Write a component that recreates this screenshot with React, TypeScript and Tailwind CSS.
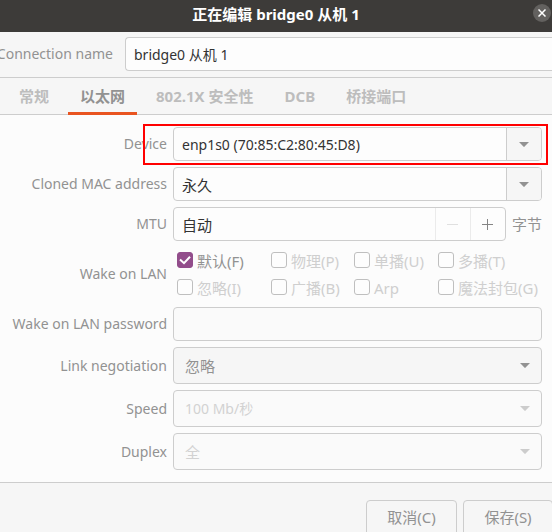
import { useState, type ReactNode } from "react";

function Caret({ className = "" }: { className?: string }) {
  return (
    <svg viewBox="0 0 10 5" aria-hidden="true" className={`h-[5px] w-2.5 fill-current ${className}`}>
      <path d="M0 0H10L5.6 4.6Q5 5.2 4.4 4.6Z" />
    </svg>
  );
}

function Field({ id, label, children }: { id: string; label: string; children: ReactNode }) {
  return (
    <>
      <label htmlFor={id} className="self-center text-right text-sm whitespace-nowrap">
        {label}
      </label>
      {children}
    </>
  );
}

function Combo({ id, value, className = "" }: { id: string; value: string; className?: string }) {
  return (
    <div className="flex h-[34px] overflow-hidden rounded border border-[#cdcdcd] bg-[#fdfdfd]">
      <input
        id={id}
        defaultValue={value}
        className={`min-w-0 flex-1 px-2 pt-0.5 text-[#333333] outline-none ${className}`}
      />
      <button
        type="button"
        aria-label="打开列表"
        className="flex w-[35px] items-center justify-center border-l border-[#cdcdcd] bg-[#f6f6f6] text-[#929292]"
      >
        <Caret />
      </button>
    </div>
  );
}

function Dropdown({
  id,
  value,
  disabled = false,
  className = "",
}: {
  id: string;
  value: string;
  disabled?: boolean;
  className?: string;
}) {
  return (
    <div className="relative">
      <select
        id={id}
        disabled={disabled}
        className={`block h-[37px] w-full appearance-none rounded border border-[#cdcdcd] bg-[#f6f6f6] px-[11px] text-[#929292] opacity-100 outline-none disabled:bg-[#fafafa] disabled:text-[#d2d2d2] ${className}`}
      >
        <option>{value}</option>
      </select>
      <Caret
        className={`pointer-events-none absolute top-4 right-3 ${disabled ? "text-[#cccccc]" : "text-[#929292]"}`}
      />
    </div>
  );
}

function Check({ label, checked = false, disabled = false }: { label: string; checked?: boolean; disabled?: boolean }) {
  return (
    <label className={`flex h-[27px] items-center gap-1 pb-0.5 whitespace-nowrap ${disabled ? "text-[#cfcfcf]" : ""}`}>
      <span className="grid size-4 shrink-0 place-items-center">
        <input
          type="checkbox"
          defaultChecked={checked}
          disabled={disabled}
          className="peer col-start-1 row-start-1 size-4 appearance-none rounded-[3px] border border-[#bfbfbf] bg-[#fdfdfd] checked:border-[#924d8b] checked:bg-[#924d8b]"
        />
        <svg
          viewBox="0 0 16 16"
          aria-hidden="true"
          className="pointer-events-none invisible z-10 col-start-1 row-start-1 size-4 fill-none stroke-white stroke-2 peer-checked:visible"
        >
          <path d="M3 7.5L7 11.2L13 4.8" />
        </svg>
      </span>
      <span className="pt-0.5">{label}</span>
    </label>
  );
}

const tabs = ["常规", "以太网", "802.1X 安全性", "DCB", "桥接端口"];

const wakeOptions = ["物理(P)", "单播(U)", "多播(T)", "忽略(I)", "广播(B)", "Arp", "魔法封包(G)"];

export default function App() {
  const [active, setActive] = useState("以太网");

  return (
    <div className="flex min-h-screen flex-col overflow-hidden bg-[#f6f6f6] font-['Noto_Sans','Noto_Sans_CJK_SC',sans-serif] text-[15px] leading-5 text-[#929292]">
      <header className="grid h-8 grid-cols-[1fr_auto_1fr] items-center bg-[#3d3b39] pb-1.5 text-white">
        <h1 className="col-start-2 pt-0.5 font-bold">正在编辑 bridge0 从机 1</h1>
        <button
          type="button"
          aria-label="关闭"
          className="mr-px grid size-[18px] place-items-center justify-self-end rounded-full bg-[#63615f]"
        >
          <svg viewBox="0 0 8 8" aria-hidden="true" className="size-2 stroke-white stroke-[1.5]">
            <path d="M0.5 0.5L7.5 7.5M7.5 0.5L0.5 7.5" />
          </svg>
        </button>
      </header>

      <div className="flex gap-3 border-b border-[#cdcdcd] pt-[5px] pb-1.5 text-sm">
        <label htmlFor="name" className="flex w-[113px] shrink-0 items-center justify-end whitespace-nowrap">
          Connection name
        </label>
        <input
          id="name"
          defaultValue="bridge0 从机 1"
          className="h-[34px] min-w-0 flex-1 rounded-l border border-r-0 border-[#cdcdcd] bg-[#fdfdfd] px-2 text-[#333333] outline-none"
        />
      </div>

      <div role="tablist" className="flex h-[37px] gap-[7px] border-b border-[#cdcdcd] pl-[7px]">
        {tabs.map((tab) => (
          <button
            key={tab}
            type="button"
            role="tab"
            aria-selected={tab === active}
            onClick={() => setActive(tab)}
            className="-mb-px border-b-3 border-transparent px-3 pt-0.5 font-bold whitespace-nowrap text-[#bdbdbd] aria-selected:border-[#e95420] aria-selected:text-[#929292]"
          >
            {tab}
          </button>
        ))}
      </div>

      <main className="grid grid-cols-[167px_1fr] gap-1.5 border-b border-[#cdcdcd] bg-[#fcfcfc] py-3 pr-2.5">
        <Field id="device" label="Device">
          <div className="relative">
            <Combo id="device" value="enp1s0 (70:85:C2:80:45:D8)" className="text-sm" />
            <div className="pointer-events-none absolute -top-[3px] -right-1.5 -bottom-1 -left-[30px] border-2 border-[#ff0000]" />
          </div>
        </Field>
        <Field id="mac" label="Cloned MAC address">
          <Combo id="mac" value="永久" />
        </Field>
        <Field id="mtu" label="MTU">
          <div className="flex items-center gap-1.5">
            <div className="flex h-[34px] min-w-0 flex-1 overflow-hidden rounded border border-[#cdcdcd] bg-[#fdfdfd]">
              <input id="mtu" defaultValue="自动" className="min-w-0 flex-1 px-2 pt-0.5 text-[#333333] outline-none" />
              <button
                type="button"
                disabled
                aria-label="减少"
                className="grid w-[35px] place-items-center border-l border-[#ebebeb] text-[#e0e0e0]"
              >
                <svg viewBox="0 0 11 11" aria-hidden="true" className="size-[11px] fill-current">
                  <path d="M0 5H11V6H0Z" />
                </svg>
              </button>
              <button
                type="button"
                aria-label="增加"
                className="grid w-[35px] place-items-center border-l border-[#ebebeb] text-[#858585]"
              >
                <svg viewBox="0 0 11 11" aria-hidden="true" className="size-[11px] fill-current">
                  <path d="M0 5H5V0H6V5H11V6H6V11H5V6H0Z" />
                </svg>
              </button>
            </div>
            <span>字节</span>
          </div>
        </Field>
        <span id="wake" className="self-center text-right text-sm">
          Wake on LAN
        </span>
        <div role="group" aria-labelledby="wake" className="grid grid-cols-[94px_83px_84px_1fr] pl-1">
          <Check label="默认(F)" checked />
          {wakeOptions.map((option) => (
            <Check key={option} label={option} disabled />
          ))}
        </div>
        <Field id="password" label="Wake on LAN password">
          <input
            id="password"
            type="text"
            disabled
            className="h-[34px] min-w-0 rounded border border-[#cdcdcd] bg-[#fafafa] px-2"
          />
        </Field>
        <Field id="negotiation" label="Link negotiation">
          <Dropdown id="negotiation" value="忽略" />
        </Field>
        <Field id="speed" label="Speed">
          <Dropdown id="speed" value="100 Mb/秒" disabled className="text-sm" />
        </Field>
        <Field id="duplex" label="Duplex">
          <Dropdown id="duplex" value="全" disabled />
        </Field>
      </main>

      <footer className="-mr-px flex h-[49px] justify-end gap-1.5 overflow-hidden pt-[17px]">
        <button type="button" className="h-9 w-[91px] shrink-0 rounded border border-[#cdcdcd] pb-0.5">
          取消(C)
        </button>
        <button type="button" className="h-9 w-[90px] shrink-0 rounded border border-[#cdcdcd] pb-0.5">
          保存(S)
        </button>
      </footer>
    </div>
  );
}
